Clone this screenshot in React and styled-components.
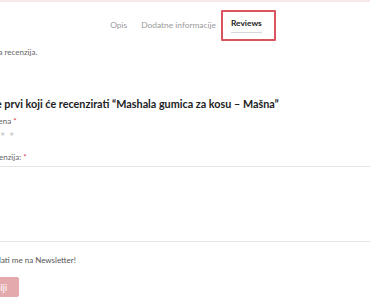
import styled, { createGlobalStyle } from 'styled-components';

const Global = createGlobalStyle`
    body {
        margin: 0;
        background: #fff;
        overflow: hidden;
        font-family: Lato, "Liberation Sans", Arial, sans-serif;
    }
`

const TopLine = styled.div`
    height: 2px;
    background: #f8e8ea;
`

const Page = styled.div`
    width: 460px;
    margin-left: -30px;
`

const Tabs = styled.ul`
    list-style: none;
    margin: 0;
    padding: 8px 28px 0 0;
    display: flex;
    justify-content: center;
    align-items: center;
    gap: 14px;
`

const Tab = styled.li`
    font-size: 8.4px;
    line-height: 11px;
    color: #9a9a9a;
`

const ActiveTab = styled.li`
    font-size: 8.4px;
    line-height: 11px;
    color: #222;
    font-weight: 700;
    padding: 6px 12px 6px 8px;
    margin: 0 -14px 0 -9px;
    border: 2px solid #d9545e;
    border-radius: 1px;
`

const Underline = styled.span`
    display: inline-block;
    padding-bottom: 3px;
    border-bottom: 1px solid #d8d8d8;
`

const Note = styled.p`
    margin: 6px 0 0;
    font-size: 8px;
    line-height: 10px;
    color: #666;
`

const Heading = styled.h3`
    margin: 40px 0 0;
    font-size: 10.8px;
    line-height: 14px;
    font-weight: 700;
    color: #222;
`

const Label = styled.label`
    display: block;
    font-size: 8px;
    line-height: 10px;
    color: #666;
    margin-top: ${(p) => p.mt || 0}px;
`

const Req = styled.span`
    color: #d9404a;
`

const Stars = styled.div`
    display: flex;
    gap: 4px;
    margin-top: 4px;
    padding-left: 3px;
    color: #c8c8c8;
    font-size: 6px;
    line-height: 8px;
`

const TextArea = styled.textarea`
    display: block;
    margin-top: 4px;
    width: 100%;
    height: 76px;
    box-sizing: border-box;
    border: 1px solid #e4e4e4;
    resize: none;
    outline: none;
`

const Check = styled.label`
    display: flex;
    align-items: center;
    gap: 2px;
    margin-top: 13px;
    font-size: 8px;
    line-height: 10px;
    color: #555;
`

const Box = styled.input`
    margin: 0;
    width: 8px;
    height: 8px;
`

const Submit = styled.button`
    display: block;
    margin-top: 12px;
    height: 20px;
    padding: 0 12px;
    border: none;
    border-radius: 2px;
    background: #e3a9ad;
    color: #fff;
    font-size: 9px;
    font-family: inherit;
`

function App() {
    return (
        <>
            <Global />
            <TopLine />
            <Page>
                <Tabs>
                    <Tab>Opis</Tab>
                    <Tab>Dodatne informacije</Tab>
                    <ActiveTab><Underline>Reviews</Underline></ActiveTab>
                </Tabs>
                <Note>Još nema recenzija.</Note>
                <Heading>Budite prvi koji će recenzirati “Mashala gumica za kosu – Mašna”</Heading>
                <Label mt={5}>Vaša ocjena <Req>*</Req></Label>
                <Stars>
                    {[1, 2, 3, 4, 5].map((n) => <span key={n}>★</span>)}
                </Stars>
                <Label mt={14}>Vaša recenzija: <Req>*</Req></Label>
                <TextArea />
                <Check><Box type="checkbox" />Pretplati me na Newsletter!</Check>
                <Submit>Pošalji</Submit>
            </Page>
        </>
    )
}

export default App
